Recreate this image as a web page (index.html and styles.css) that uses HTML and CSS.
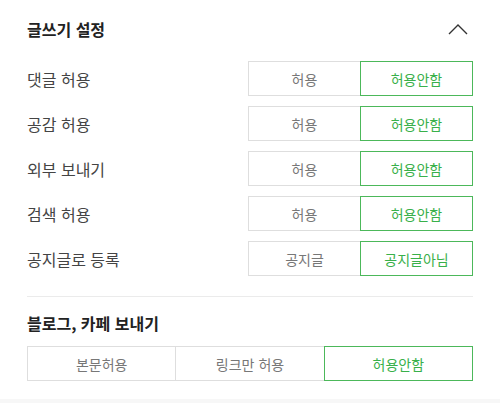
FILE: index.html
```html
<!DOCTYPE html>
<html lang="ko">
<head>
<meta charset="utf-8">
<link rel="stylesheet" href="styles.css">
</head>
<body>
<div class="panel">
  <div class="head">
    <h2 class="title">글쓰기 설정</h2>
    <svg class="chev" width="20" height="12" viewBox="0 0 20 12"><polyline points="1,11 10,2 19,11" fill="none" stroke="#333" stroke-width="1.4"/></svg>
  </div>
  <div class="rows">
    <div class="row"><span class="label">댓글 허용</span><div class="seg"><span class="opt">허용</span><span class="opt on">허용안함</span></div></div>
    <div class="row"><span class="label">공감 허용</span><div class="seg"><span class="opt">허용</span><span class="opt on">허용안함</span></div></div>
    <div class="row"><span class="label">외부 보내기</span><div class="seg"><span class="opt">허용</span><span class="opt on">허용안함</span></div></div>
    <div class="row"><span class="label">검색 허용</span><div class="seg"><span class="opt">허용</span><span class="opt on">허용안함</span></div></div>
    <div class="row"><span class="label">공지글로 등록</span><div class="seg"><span class="opt">공지글</span><span class="opt on">공지글아님</span></div></div>
  </div>
  <div class="divider"></div>
  <h3 class="subtitle">블로그, 카페 보내기</h3>
  <div class="seg seg3"><span class="opt">본문허용</span><span class="opt">링크만 허용</span><span class="opt on">허용안함</span></div>
</div>
<div class="footer"></div>
</body>
</html>
```
FILE: styles.css
```css
html, body {
  margin: 0;
  padding: 0;
  background: #fff;
  font-family: "Noto Sans CJK KR", "Noto Sans", sans-serif;
}
.panel {
  padding: 19px 27px 18px 27px;
}
.head {
  display: flex;
  align-items: center;
  justify-content: space-between;
  height: 20px;
}
.title {
  margin: 0;
  font-size: 16px;
  font-weight: 700;
  line-height: 20px;
  color: #222;
}
.chev {
  margin-right: 5px;
}
.rows {
  margin-top: 22px;
  display: flex;
  flex-direction: column;
  gap: 10px;
}
.row {
  display: flex;
  align-items: center;
  justify-content: space-between;
  height: 35px;
}
.label {
  font-size: 16px;
  color: #444;
  line-height: 20px;
}
.seg {
  display: flex;
  height: 35px;
}
.opt {
  box-sizing: border-box;
  width: 113px;
  height: 35px;
  display: flex;
  align-items: center;
  justify-content: center;
  border: 1px solid #dedede;
  font-size: 14px;
  color: #777;
  background: #fff;
}
.opt + .opt {
  margin-left: -1px;
}
.opt.on {
  border-color: #4cb85a;
  color: #39b04a;
  position: relative;
  z-index: 1;
}
.divider {
  margin-top: 20px;
  height: 1px;
  background: #ebebeb;
}
.subtitle {
  margin: 16px 0 0 0;
  font-size: 16px;
  font-weight: 700;
  line-height: 20px;
  color: #222;
}
.seg3 {
  margin-top: 13px;
}
.seg3 .opt {
  flex: 1;
  width: auto;
}
.footer {
  height: 4px;
  background: #f7f7f7;
}
```
